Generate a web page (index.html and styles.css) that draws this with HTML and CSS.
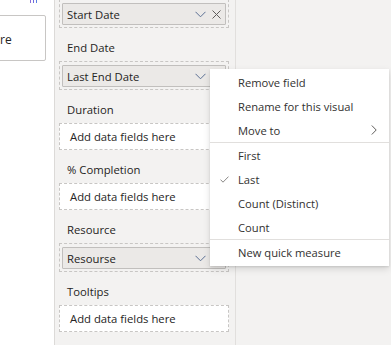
FILE: index.html
```html
<!DOCTYPE html>
<html>
<head>
<meta charset="utf-8">
<link rel="stylesheet" href="styles.css">
</head>
<body>
<div class="app">
  <div class="canvas">
    <div class="viz-icon">
      <svg width="8" height="4" viewBox="0 0 8 4"><rect x="0" y="0" width="1" height="3" fill="#8a6fd6"/><rect x="3" y="0" width="1" height="3" fill="#6f6ae0"/><rect x="6" y="0" width="1" height="3" fill="#5b7fe0"/></svg>
    </div>
    <div class="card"><span class="card-text">re</span></div>
  </div>
  <div class="pane">
    <div class="well well-pill first-well">
      <div class="pill">
        <span class="pill-text">Start Date</span>
        <svg class="chev" width="11" height="7" viewBox="0 0 11 7"><path d="M0.5 0.8 L5.5 5.8 L10.5 0.8" fill="none" stroke="#5b6f93" stroke-width="1"/></svg>
        <svg class="xicon" width="9" height="9" viewBox="0 0 9 9"><path d="M0.5 0.5 L8.5 8.5 M8.5 0.5 L0.5 8.5" fill="none" stroke="#605e5c" stroke-width="1"/></svg>
      </div>
    </div>
    <div class="section">
      <div class="label">End Date</div>
      <div class="well well-pill">
        <div class="pill">
          <span class="pill-text">Last End Date</span>
          <svg class="chev" width="11" height="7" viewBox="0 0 11 7"><path d="M0.5 0.8 L5.5 5.8 L10.5 0.8" fill="none" stroke="#5b6f93" stroke-width="1"/></svg>
          <span class="xspace"></span>
        </div>
      </div>
    </div>
    <div class="section">
      <div class="label">Duration</div>
      <div class="well well-empty">Add data fields here</div>
    </div>
    <div class="section">
      <div class="label">% Completion</div>
      <div class="well well-empty">Add data fields here</div>
    </div>
    <div class="section">
      <div class="label">Resource</div>
      <div class="well well-pill">
        <div class="pill">
          <span class="pill-text">Resourse</span>
          <svg class="chev" width="11" height="7" viewBox="0 0 11 7"><path d="M0.5 0.8 L5.5 5.8 L10.5 0.8" fill="none" stroke="#5b6f93" stroke-width="1"/></svg>
          <span class="xspace"></span>
        </div>
      </div>
    </div>
    <div class="section">
      <div class="label">Tooltips</div>
      <div class="well well-empty">Add data fields here</div>
    </div>
  </div>
  <div class="side"></div>

  <div class="menu">
    <div class="item">Remove field</div>
    <div class="item">Rename for this visual</div>
    <div class="item has-sub">Move to
      <svg class="sub-chev" width="6" height="10" viewBox="0 0 6 10"><path d="M0.8 0.5 L5.2 5 L0.8 9.5" fill="none" stroke="#605e5c" stroke-width="1"/></svg>
    </div>
    <div class="sep"></div>
    <div class="item">First</div>
    <div class="item checked">
      <svg class="check" width="9" height="7" viewBox="0 0 9 7"><path d="M0.5 3.6 L3 6.2 L8.5 0.6" fill="none" stroke="#8a8886" stroke-width="1"/></svg>
      Last</div>
    <div class="item">Count (Distinct)</div>
    <div class="item">Count</div>
    <div class="sep"></div>
    <div class="item">New quick measure</div>
  </div>
</div>
</body>
</html>
```

FILE: styles.css
```css
* { box-sizing: border-box; }
html, body {
  margin: 0;
  padding: 0;
  width: 391px;
  height: 345px;
  overflow: hidden;
  background: #f3f2f1;
  font-family: "Open Sans", "Noto Sans", sans-serif;
  font-size: 11px;
  color: #252423;
}
.app {
  position: relative;
  display: flex;
  width: 391px;
  height: 345px;
}
.canvas {
  width: 55px;
  flex: none;
  background: #ffffff;
  border-right: 1px solid #dcdad8;
  position: relative;
}
.viz-icon {
  display: flex;
  justify-content: flex-start;
  padding-left: 30px;
  height: 15px;
  line-height: 0;
}
.card {
  margin-left: -20px;
  width: 66px;
  height: 46px;
  border: 1px solid #c8c6c4;
  border-radius: 2px;
  background: #fff;
  display: flex;
  align-items: center;
  padding-left: 19px;
  padding-top: 2px;
  font-size: 12px;
}
.pane {
  width: 181px;
  flex: none;
  padding: 0 6px 0 4px;
  border-right: 1px solid #e1dfdd;
  background: #f3f2f1;
}
.side {
  flex: 1;
  background: #f3f2f1;
}
.first-well { margin-top: -1px; }
.section { margin-top: 12px; }
.label {
  height: 16px;
  line-height: 16px;
  padding-left: 8px;
  margin-bottom: 5px;
  font-size: 11.3px;
}
.well {
  width: 170px;
  border: 1px dashed #c8c6c4;
}
.well-pill {
  padding: 3px 2px 2px 2px;
}
.well-empty {
  height: 27px;
  background: #ffffff;
  padding-left: 10px;
  display: flex;
  align-items: center;
  font-size: 11.3px;
}
.pill {
  height: 22px;
  background: #ebe9e7;
  border: 1px solid #c1bfbd;
  border-radius: 1px;
  display: flex;
  align-items: center;
  padding-left: 4px;
  padding-right: 4px;
  font-size: 11.3px;
}
.pill-text { flex: 1; }
.chev { margin-right: 6px; }
.xspace { width: 9px; }
.menu {
  position: absolute;
  left: 210px;
  top: 69px;
  width: 179px;
  background: #ffffff;
  padding: 1px 0 2px 0;
  box-shadow: 0 3.2px 7.2px rgba(0,0,0,0.13), 0 0.6px 1.8px rgba(0,0,0,0.11);
  font-size: 11.2px;
  color: #323130;
}
.item {
  height: 24px;
  line-height: 25px;
  padding-left: 28px;
  position: relative;
}
.sub-chev {
  position: absolute;
  right: 12px;
  top: 7px;
}
.check {
  position: absolute;
  left: 10px;
  top: 9px;
}
.sep {
  height: 1px;
  background: #e1dfdd;
}
```
